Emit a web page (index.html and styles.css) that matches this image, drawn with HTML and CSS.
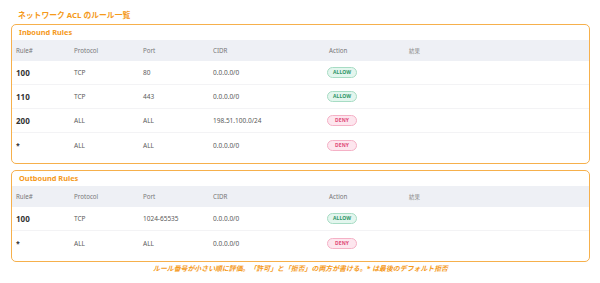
FILE: index.html
```html
<!DOCTYPE html>
<html lang="ja">
<head>
<meta charset="utf-8">
<link rel="stylesheet" href="styles.css">
</head>
<body>
<div class="page">
  <h1 class="title">ネットワーク ACL のルール一覧</h1>

  <section class="card">
    <h2 class="card-title">Inbound Rules</h2>
    <div class="grid">
      <div class="row head">
        <div>Rule#</div><div>Protocol</div><div>Port</div><div>CIDR</div><div>Action</div><div>結果</div>
      </div>
      <div class="row">
        <div class="num">100</div><div>TCP</div><div>80</div><div>0.0.0.0/0</div><div><span class="badge allow">ALLOW</span></div><div></div>
      </div>
      <div class="row">
        <div class="num">110</div><div>TCP</div><div>443</div><div>0.0.0.0/0</div><div><span class="badge allow">ALLOW</span></div><div></div>
      </div>
      <div class="row">
        <div class="num">200</div><div>ALL</div><div>ALL</div><div>198.51.100.0/24</div><div><span class="badge deny">DENY</span></div><div></div>
      </div>
      <div class="row">
        <div class="num star">*</div><div>ALL</div><div>ALL</div><div>0.0.0.0/0</div><div><span class="badge deny">DENY</span></div><div></div>
      </div>
    </div>
  </section>

  <section class="card">
    <h2 class="card-title">Outbound Rules</h2>
    <div class="grid">
      <div class="row head">
        <div>Rule#</div><div>Protocol</div><div>Port</div><div>CIDR</div><div>Action</div><div>結果</div>
      </div>
      <div class="row">
        <div class="num">100</div><div>TCP</div><div>1024-65535</div><div>0.0.0.0/0</div><div><span class="badge allow">ALLOW</span></div><div></div>
      </div>
      <div class="row">
        <div class="num star">*</div><div>ALL</div><div>ALL</div><div>0.0.0.0/0</div><div><span class="badge deny">DENY</span></div><div></div>
      </div>
    </div>
  </section>

  <p class="note">ルール番号が小さい順に評価。「許可」と「拒否」の両方が書ける。* は最後のデフォルト拒否</p>
</div>
</body>
</html>
```

FILE: styles.css
```css
* { box-sizing: border-box; }
html, body { margin: 0; padding: 0; background: #fff; }
body {
  font-family: "Noto Sans", "Noto Sans CJK JP", sans-serif;
  color: #5a5a5a;
}
.page {
  width: 600px;
  padding: 9px 10px 0 11px;
}
.title {
  margin: 0 0 3px 7px;
  font-size: 7.8px;
  line-height: 12px;
  font-weight: 700;
  color: #f59a1b;
}
.card {
  border: 1px solid #f6b04c;
  border-radius: 5px;
  padding-bottom: 6px;
  margin-bottom: 6px;
  overflow: hidden;
}
.card-title {
  margin: 0;
  padding: 0 0 0 7px;
  height: 15px;
  font-size: 7.4px;
  line-height: 15px;
  font-weight: 700;
  color: #f59a1b;
}
.row {
  display: grid;
  grid-template-columns: 58px 69px 70px 116px 80px 1fr;
  height: 24px;
  align-items: center;
  border-bottom: 1px solid #f3f3f5;
  font-size: 6.5px;
}
.row:last-child { border-bottom: none; }
.row > div { padding-left: 4px; }
.row.head {
  height: 21px;
  background: #eef0f5;
  border-bottom: none;
  color: #777;
  font-size: 6.2px;
}
.row.head > div:last-child { font-size: 5.4px; color: #888; }
.num {
  font-size: 8px;
  font-weight: 700;
  color: #333;
}
.num.star { font-size: 7px; }
.badge {
  display: inline-block;
  margin-left: -2px;
  height: 11px;
  line-height: 9px;
  padding: 0 5px;
  border-radius: 6px;
  font-size: 5px;
  font-weight: 700;
  letter-spacing: 0.1px;
  border: 1px solid;
}
.badge.allow {
  background: #e3f6ee;
  border-color: #a7dcc4;
  color: #2f9466;
}
.badge.deny {
  background: #fde6ee;
  border-color: #f5b1c6;
  color: #e04a78;
  padding: 0 7px;
}
.note {
  margin: -3px 0 0;
  text-align: center;
  font-size: 6.9px;
  line-height: 8px;
  font-style: italic;
  font-weight: 700;
  color: #f59a1b;
}
```
